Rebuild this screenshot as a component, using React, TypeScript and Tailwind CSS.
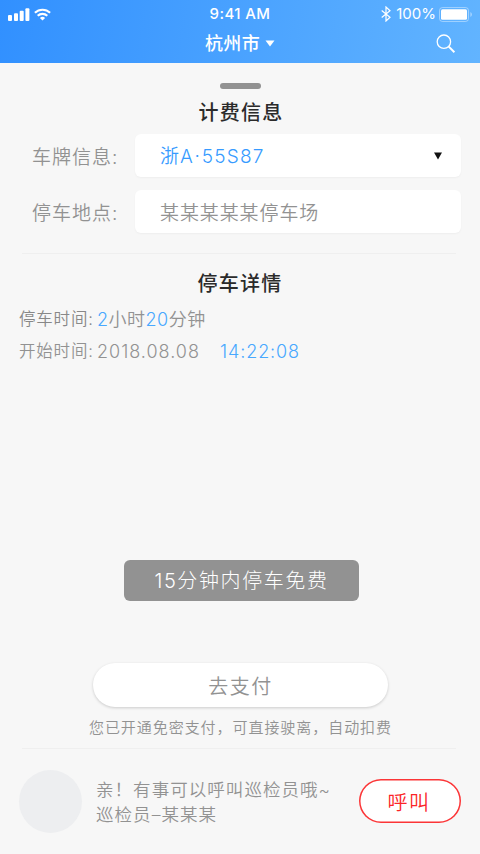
import React from 'react'

type FieldProps = {
  label: string
  className?: string
  children: React.ReactNode
}

function StatusBar() {
  return (
    <div className="grid h-7 grid-cols-3 items-center text-white">
      <div className="flex items-center gap-1 pl-2">
        <svg width="22" height="13" viewBox="0 0 22 13" fill="currentColor">
          <rect x="0" y="7" width="4" height="6" rx="1" />
          <rect x="6" y="5.3" width="4" height="7.7" rx="1" />
          <rect x="11.7" y="2.8" width="4" height="10.2" rx="1" />
          <rect x="17.4" y="0.3" width="4" height="12.7" rx="1" />
        </svg>
        <svg width="17" height="13" viewBox="0 0 17 13" fill="none" stroke="currentColor" strokeWidth="2.1">
          <path d="M.9 4.8a11 11 0 0 1 15.2 0" />
          <path d="M3.7 7.8a7 7 0 0 1 9.6 0" />
          <path d="M5.9 9.9a3.8 3.8 0 0 1 5.2 0L8.5 12.6z" fill="currentColor" stroke="none" />
        </svg>
      </div>
      <div className="pt-px text-center text-[15px] font-medium tracking-[0.4px]">9:41 AM</div>
      <div className="flex items-center justify-end pr-[7px] text-[15px]">
        <svg className="mr-[5px]" width="10" height="16" viewBox="0 0 10 16" fill="none" stroke="currentColor" strokeWidth="1.2">
          <path d="M.7 4.5 9 11.3 5 15V1l4 3.7L.7 11.5" />
        </svg>
        <span className="pt-px">100%</span>
        <svg className="ml-[3px]" width="34" height="15" viewBox="0 0 34 15" fill="currentColor">
          <rect x=".5" y=".5" width="29" height="14" rx="3" fill="none" stroke="currentColor" strokeOpacity=".4" />
          <rect x="2" y="2.3" width="26" height="10.4" rx="1.5" />
          <path d="M31.3 5v5c1-.4 1.7-1.3 1.7-2.5s-.7-2.1-1.7-2.5z" opacity=".4" />
        </svg>
      </div>
    </div>
  )
}

function Header() {
  return (
    <header className="h-[63px] bg-linear-[100deg] from-[#3190ff] to-[#62b4ff]">
      <StatusBar />
      <div className="grid h-[30px] grid-cols-[1fr_auto_1fr] items-center text-white">
        <span />
        <button className="flex items-center gap-[5px] text-[18px] font-medium tracking-[0.4px]">
          杭州市
          <svg width="10" height="7" viewBox="0 0 10 7" fill="currentColor">
            <path d="M.5.5h9L5 6.5z" />
          </svg>
        </button>
        <svg className="mt-[2px] mr-6 justify-self-end" width="20" height="20" viewBox="0 0 20 20" fill="none" stroke="currentColor">
          <circle cx="7.9" cy="7.7" r="6.7" strokeWidth="1.3" />
          <path d="m12.8 12.6 5.6 5.6" strokeWidth="2" />
        </svg>
      </div>
    </header>
  )
}

function Field({ label, className = '', children }: FieldProps) {
  return (
    <div className={`flex items-center ${className}`}>
      <span className="w-[103px] pt-[5px] text-[19px] tracking-[1px] whitespace-nowrap">{label}</span>
      <div className="flex h-[43px] flex-1 items-center justify-between rounded-md bg-white pr-[18px] pl-[25px] text-[19px] tracking-[0.9px] shadow-[0_1px_2px_rgba(0,0,0,0.04)]">
        {children}
      </div>
    </div>
  )
}

export default function App() {
  return (
    <div
      lang="zh-CN"
      className="flex h-[854px] w-[480px] flex-col overflow-hidden bg-[#f7f7f7] font-['Inter','Noto_Sans_CJK_SC',sans-serif] text-[#929292]"
    >
      <Header />

      <section className="flex h-[190px] flex-col pr-[19px] pl-8 font-[350]">
        <div className="mt-5 ml-[188px] h-[6px] w-[41px] rounded-full bg-[#929292]" />
        <h2 className="mt-[9px] mr-[11px] text-center text-[20px] leading-[30px] font-medium tracking-[1.2px] text-[#2b2b2b]">计费信息</h2>
        <Field label="车牌信息:" className="mt-[6px]">
          <span className="pt-1 text-[#379bff]">
            浙A<span className="mx-[1px]">·</span>
            <span className="tracking-[1.2px]">55S87</span>
          </span>
          <svg width="10" height="8" viewBox="0 0 10 8" fill="#111">
            <path d="M1 .5h8L5 7.5z" />
          </svg>
        </Field>
        <Field label="停车地点:" className="mt-[13px]">
          <span className="pt-[5px]">某某某某某停车场</span>
        </Field>
      </section>

      <section className="mr-6 ml-[22px] border-t border-[#efefef] font-[350]">
        <h2 className="mt-[15px] ml-[2px] text-center text-[20px] leading-[30px] font-medium tracking-[1.2px] text-[#2b2b2b]">停车详情</h2>
        <div className="-ml-[3px] text-[18px]">
          <p className="mt-1 flex h-8 items-center">
            <span className="w-[78px] pt-px text-[16.5px] tracking-[0.8px] whitespace-nowrap text-[#888]">停车时间:</span>
            <span className="tracking-[0.5px]">
              <b className="font-[350] text-[#48a8ff]">2</b>小时<b className="font-[350] text-[#48a8ff]">20</b>分钟
            </span>
          </p>
          <p className="flex h-8 items-center">
            <span className="w-[78px] pt-px text-[16.5px] tracking-[0.8px] whitespace-nowrap">开始时间:</span>
            <span className="w-[123px] tracking-[1px]">2018.08.08</span>
            <span className="tracking-[0.9px] text-[#48a8ff]">14:22:08</span>
          </p>
        </div>
      </section>

      <div className="mt-[193px] ml-[124px] flex h-[41px] w-[235px] items-center justify-center rounded-md bg-[#929292] pt-px text-[20px] font-light tracking-[1.6px] text-white">
        15分钟内停车免费
      </div>

      <div className="mt-[62px] flex flex-col items-center font-[350]">
        <button className="h-[44px] w-[295px] rounded-full bg-white pt-[3px] pl-px text-[20px] tracking-[1.5px] shadow-[0_1px_3px_rgba(0,0,0,0.18)]">
          去支付
        </button>
        <p className="mt-[9px] pl-px text-[15px] leading-6 tracking-[0.95px]">您已开通免密支付，可直接驶离，自动扣费</p>
      </div>

      <footer className="mt-2 mr-6 ml-[22px] flex border-t border-[#efefef] pt-[21px] font-[350]">
        <div className="-ml-[3px] size-[63px] shrink-0 rounded-full bg-[#edeef0]" />
        <div className="mt-[7px] ml-[14px] flex-1 text-[17.5px] leading-[25px] tracking-[1.05px] whitespace-nowrap">
          <p>亲！有事可以呼叫巡检员哦~</p>
          <p>巡检员–某某某</p>
        </div>
        <button className="mt-[9px] -mr-[5px] h-[44px] w-[102px] shrink-0 rounded-full bg-white pt-[3px] pr-[2px] text-[20px] tracking-[1.5px] text-[#fb2528] shadow-[inset_0_0_0_1.5px_#fb3537]">
          呼叫
        </button>
      </footer>
    </div>
  )
}
